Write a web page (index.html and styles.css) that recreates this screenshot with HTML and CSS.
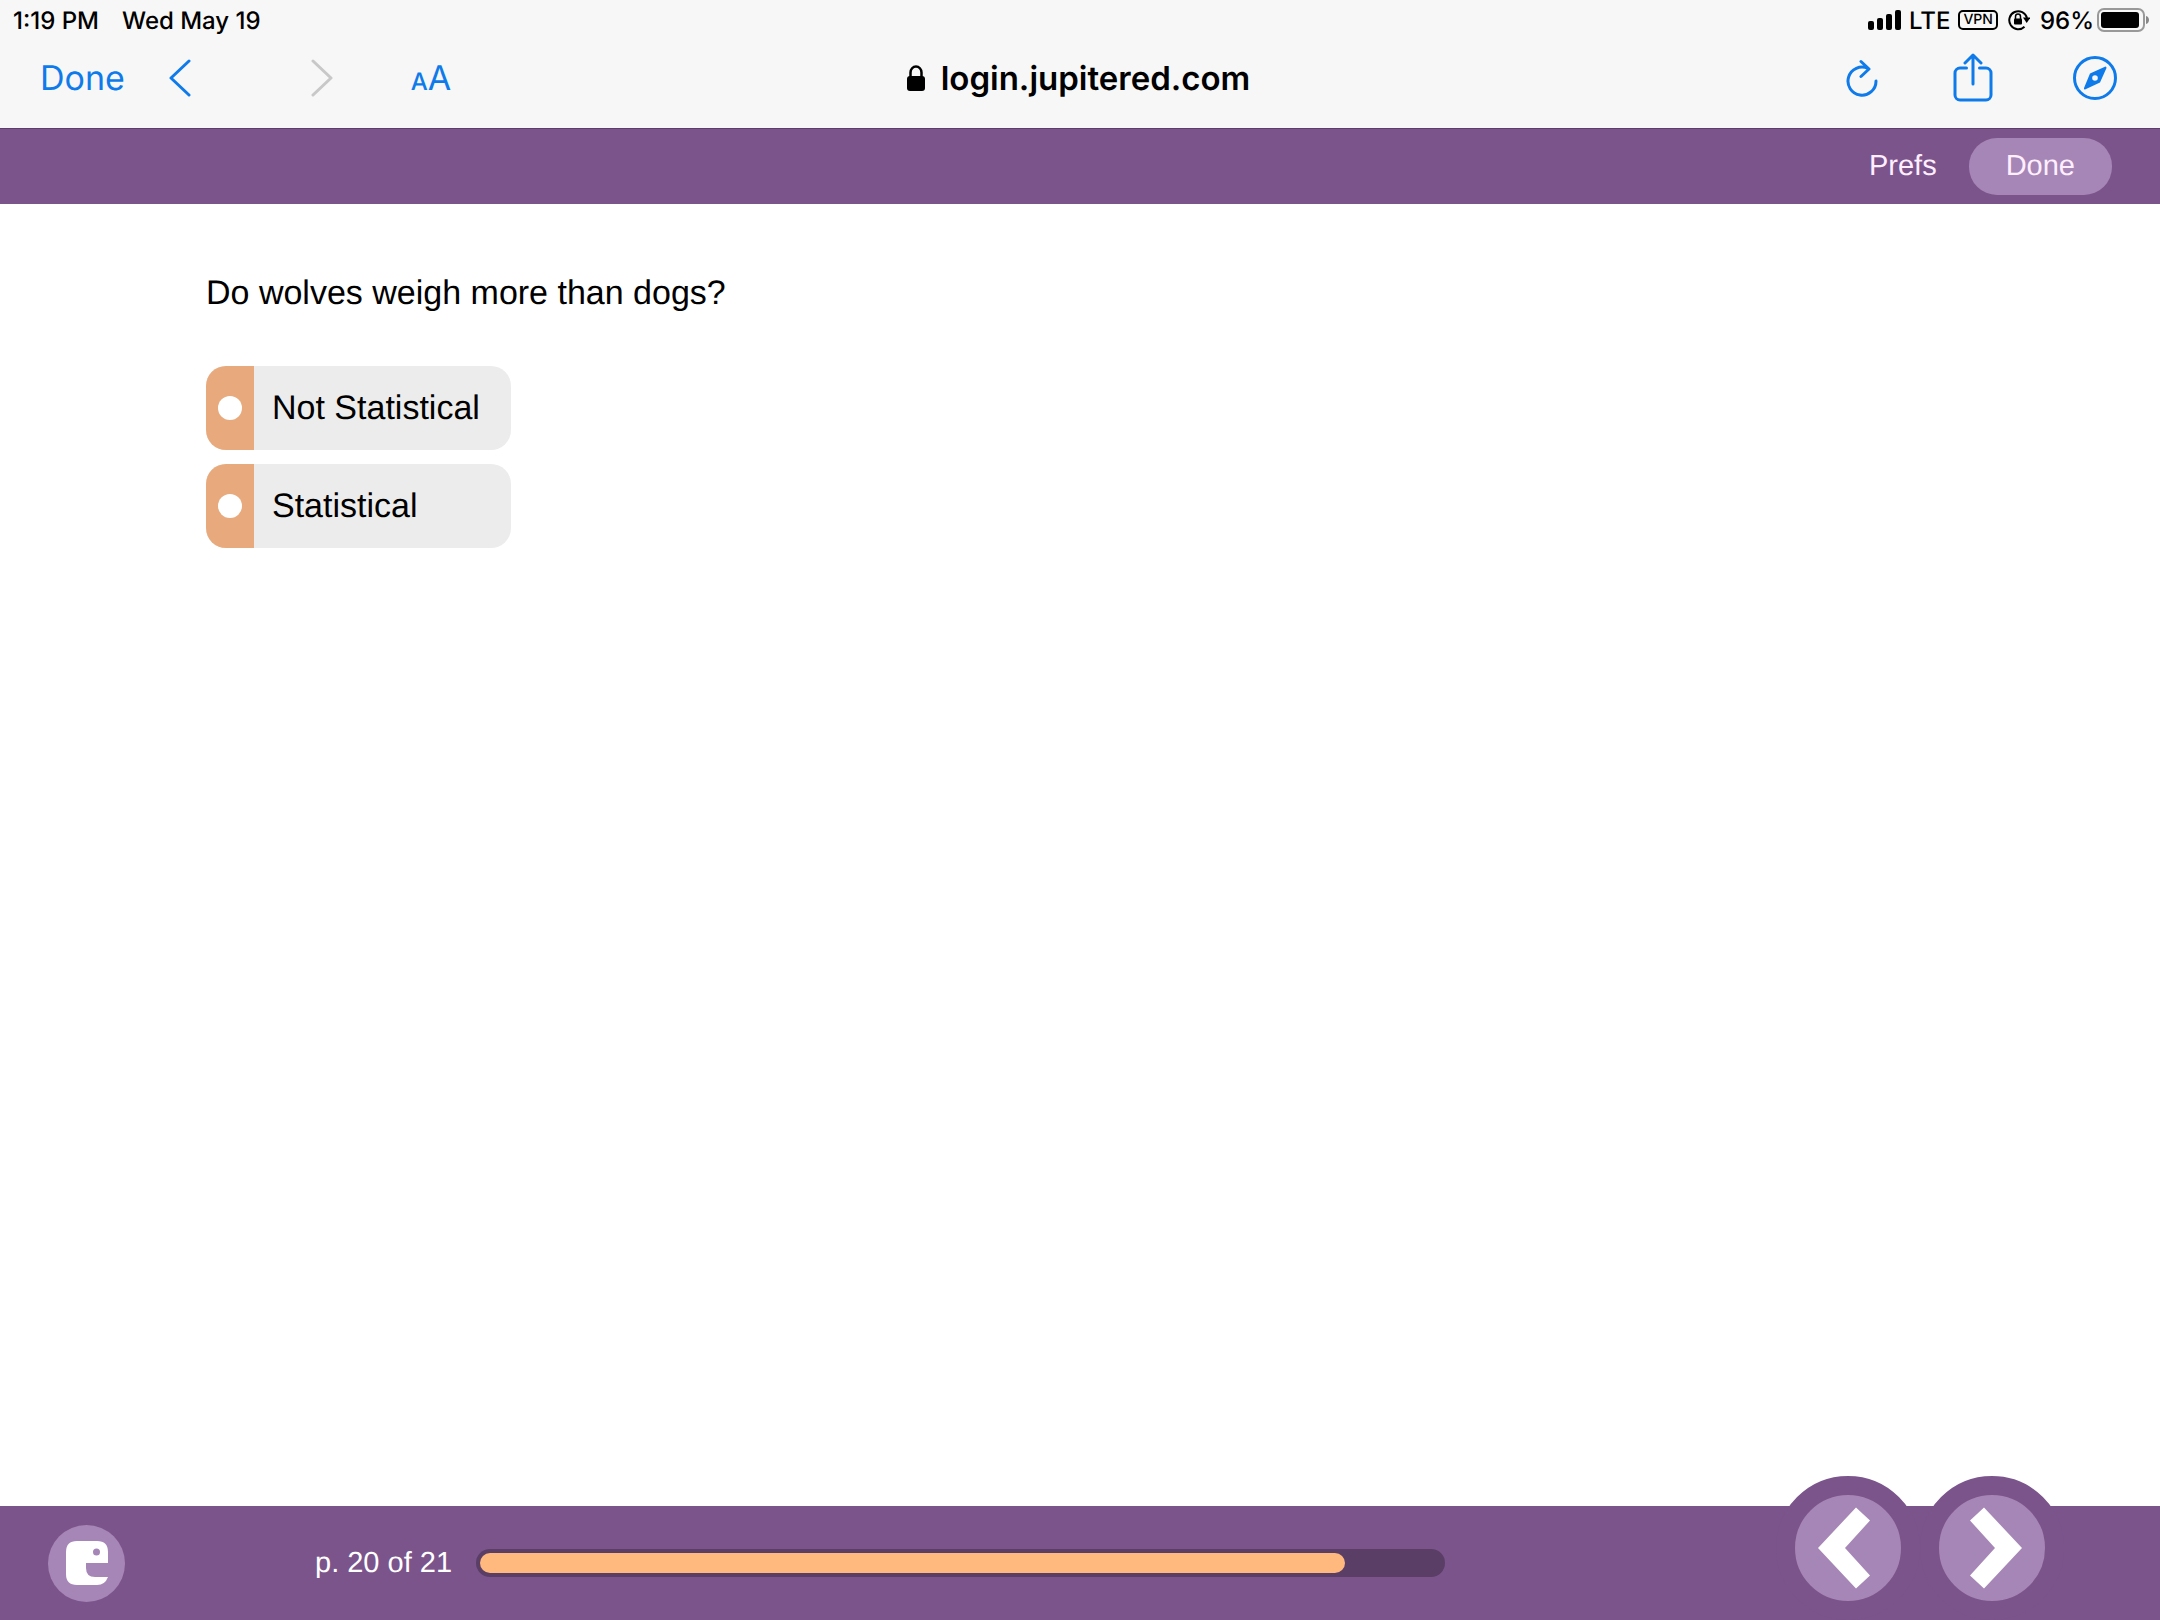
FILE: index.html
```html
<!DOCTYPE html>
<html lang="en">
<head>
  <meta charset="UTF-8" />
  <meta name="viewport" content="width=device-width, initial-scale=1.0"/>
  <title>login.jupitered.com</title>
  <link rel="stylesheet" href="styles.css">
</head>
<body>
  <!-- Browser bars -->
  <header class="browser">
    <div class="status">
      <span>1:19 PM</span>
      <span class="date">Wed May 19</span>
      <svg class="signal" width="34" height="20" viewBox="0 0 34 20">
        <rect x="0" y="11" width="6" height="9" rx="2"/>
        <rect x="9" y="8" width="6" height="12" rx="2"/>
        <rect x="18" y="4" width="6" height="16" rx="2"/>
        <rect x="27" y="0" width="6" height="20" rx="2"/>
      </svg>
      <span class="network">LTE</span>
      <span class="vpn">VPN</span>
      <svg class="rotation" width="22" height="22" viewBox="0 0 22 22">
        <path d="M16.500 17.700A9 9 0 1 1 19 9" fill="none" stroke="#000" stroke-width="2"/>
        <path d="M15 8.500H22.500L18.700 14Z"/>
        <rect x="6" y="9.500" width="8" height="6" rx="1"/>
        <path d="M7.500 10V7.500a2.500 2.500 0 0 1 5 0V10" fill="none" stroke="#000" stroke-width="1.500"/>
      </svg>
      <span class="percent">96%</span>
      <svg class="battery" width="53" height="24" viewBox="0 0 53 24">
        <rect x="1" y="1" width="46" height="22" rx="6" fill="none" stroke="#999" stroke-width="2"/>
        <rect x="4" y="4" width="38" height="16" rx="3"/>
        <path d="M49 8c4 1 4 7 0 8z" fill="#888"/>
      </svg>
    </div>

    <div class="toolbar">
      <div class="tools-left">
        <button class="tool done">Done</button>
        <button class="tool back" aria-label="Back">
          <svg width="22" height="38" viewBox="0 0 22 38"><path d="M20 2L2 19L20 36"/></svg>
        </button>
        <button class="tool forward" aria-label="Forward" disabled>
          <svg width="22" height="38" viewBox="0 0 22 38"><path d="M2 2L20 19L2 36"/></svg>
        </button>
        <button class="tool text-size"><small>A</small>A</button>
      </div>
      <div class="address">
        <svg width="18" height="26" viewBox="0 0 18 26">
          <rect x="0" y="11" width="18" height="15" rx="3"/>
          <path d="M3.500 12V7.500a5.500 6 0 0 1 11 0V12" fill="none" stroke="#000" stroke-width="2.500"/>
        </svg>
        <span>login.jupitered.com</span>
      </div>
      <div class="tools-right">
        <button class="tool" aria-label="Reload">
          <svg width="32" height="38" viewBox="0 0 32 38">
            <path d="M22 9.500A14 14 0 1 0 30 22M15 2.500L23 10L15 17.500"/>
          </svg>
        </button>
        <button class="tool share" aria-label="Share">
          <svg width="40" height="50" viewBox="0 0 40 50">
            <path d="M13.500 15H7a5 5 0 0 0-5 5V42a5 5 0 0 0 5 5H33a5 5 0 0 0 5-5V20a5 5 0 0 0-5-5H26.500M20 31V2.500M12 10L20 2L28 10"/>
          </svg>
        </button>
        <button class="tool compass" aria-label="Open in Safari">
          <svg width="44" height="44" viewBox="0 0 44 44">
            <circle cx="22" cy="22" r="20.500"/>
            <path class="needle" fill-rule="evenodd" d="M32.500 10.500Q33.500 10.500 33.500 12L27 26.500L12 33.500Q10.500 33.500 11 32L17 17.500ZM22 19.200a2.800 2.800 0 1 0 0 5.600a2.800 2.800 0 1 0 0-5.600Z"/>
          </svg>
        </button>
      </div>
    </div>
  </header>

  <!-- Top bar -->
  <nav class="topbar">
    <a href="#" class="prefs">Prefs</a>
    <button class="pill">Done</button>
  </nav>

  <main class="question">
    <p id="questionText">Do wolves weigh more than dogs?</p>
    <div class="choices" role="radiogroup" aria-labelledby="questionText">
      <label class="choice">
        <span class="marker"><input type="radio" name="answer" value="not"></span>
        <span class="choice-text">Not Statistical</span>
      </label>
      <label class="choice">
        <span class="marker"><input type="radio" name="answer" value="stat"></span>
        <span class="choice-text">Statistical</span>
      </label>
    </div>
  </main>

  <!-- Page progress and prev/next -->
  <footer class="bottombar">
    <button class="logo" aria-label="Menu">
      <svg width="42" height="44" viewBox="0 0 42 44">
        <path fill="#fff" fill-rule="evenodd" d="M11 0H31Q42 0 42 11V22H20V27Q20 36 29 36H42Q39 44 31 44H11Q0 44 0 33V11Q0 0 11 0ZM30.500 7.500a3.500 3.500 0 1 0 0 7a3.500 3.500 0 1 0 0-7Z"/>
      </svg>
    </button>
    <span class="page">p. 20 of 21</span>
    <div class="progress" role="progressbar" aria-label="Page" aria-valuenow="20" aria-valuemax="21">
      <div class="fill" style="width: 90%"></div>
    </div>
    <div class="pager">
      <button class="arrow" aria-label="Previous page">
        <svg width="106" height="106" viewBox="0 0 106 106"><path d="M61 12.500L75 25.500L50 53L75 80.500L61 93.500L23 53Z"/></svg>
      </button>
      <button class="arrow" aria-label="Next page">
        <svg width="106" height="106" viewBox="0 0 106 106"><path d="M45 12.500L31 25.500L56 53L31 80.500L45 93.500L83 53Z"/></svg>
      </button>
    </div>
  </footer>
</body>
</html>
```

FILE: styles.css
```css
* {
  box-sizing: border-box;
}

body {
  margin: 0;
  min-height: 100vh;
  display: flex;
  flex-direction: column;
  background: #fff;
  color: #000;
  font-family: "Liberation Sans", Arial, sans-serif;
  text-rendering: geometricPrecision;
}

button {
  padding: 0;
  border: none;
  background: none;
  font-family: inherit;
  text-rendering: inherit;
  cursor: pointer;
}

svg {
  display: block;
  flex-shrink: 0;
}

/* browser bars */
.browser {
  background: #f7f7f7;
  border-bottom: 1px solid #5c3f69;
  font-family: Inter, "Liberation Sans", sans-serif;
}

.status {
  display: flex;
  align-items: center;
  height: 40px;
  padding: 0 10px 0 13px;
  font-size: 24px;
  font-weight: 500;
}

.date {
  margin-left: 23px;
}

.signal {
  margin-left: auto;
}

.network {
  margin-left: 7px;
}

.vpn {
  margin-left: 8px;
  padding: 0 3px;
  border: 2px solid #000;
  border-radius: 5px;
  font-size: 14px;
  line-height: 16px;
}

.rotation {
  margin-left: 10px;
}

.percent {
  margin-left: 10px;
}

.battery {
  margin-left: 3px;
}

.toolbar {
  display: grid;
  grid-template-columns: 1fr auto 1fr;
  align-items: center;
  height: 88px;
  padding: 0 43px 12px 40px;
}

.tools-left, .tools-right, .address {
  display: flex;
  align-items: center;
}

.tools-right {
  justify-content: flex-end;
}

.tool {
  color: #0f7bea;
  font-size: 34px;
}

.tool svg {
  fill: none;
  stroke: currentColor;
  stroke-width: 3;
  stroke-linecap: round;
  stroke-linejoin: round;
}

.tool .needle {
  fill: currentColor;
  stroke: none;
}

.tool:disabled {
  color: #c8c8c8;
}

.back {
  margin-left: 44px;
}

.forward {
  margin-left: 120px;
}

.text-size {
  margin-left: 78px;
}

.text-size small {
  font-size: 24px;
  font-weight: 500;
}

.share {
  margin-left: 75px;
}

.compass {
  margin-left: 80px;
}

.address {
  gap: 16px;
  font-size: 33px;
  font-weight: 600;
}

/* purple bars */
.topbar {
  display: flex;
  justify-content: flex-end;
  align-items: center;
  gap: 32px;
  height: 75px;
  padding: 0 48px;
  background: #7b548c;
  font-size: 29px;
}

.prefs {
  color: #ffeeff;
  text-decoration: none;
}

.pill {
  height: 57px;
  padding: 0 37px;
  border-radius: 28px;
  background: #a686b6;
  color: #ffeeff;
  font-size: 29px;
}

/* question */
.question {
  flex: 1;
  padding: 69px 206px;
  font-size: 34px;
  line-height: 40px;
}

.question p {
  margin: 0 0 53px;
}

.choices {
  display: inline-grid;
  gap: 14px;
}

.choice {
  display: flex;
  height: 84px;
  border-radius: 20px;
  overflow: hidden;
  background: #ececec;
  cursor: pointer;
}

.marker {
  display: flex;
  flex-shrink: 0;
  align-items: center;
  justify-content: center;
  width: 48px;
  background: #e8aa7c;
}

.marker input {
  appearance: none;
  width: 24px;
  height: 24px;
  margin: 0;
  border-radius: 50%;
  background: #fff;
}

.marker input:checked {
  border: 6px solid #fff;
  background: #7b548c;
}

.choice-text {
  align-self: center;
  padding: 0 31px 0 18px;
  white-space: nowrap;
}

/* bottom bar */
.bottombar {
  display: flex;
  align-items: center;
  padding: 0 96px 0 48px;
  background: #7b548c;
}

.logo {
  display: flex;
  align-items: center;
  justify-content: center;
  width: 77px;
  height: 77px;
  border-radius: 50%;
  background: #a686b6;
}

.page {
  margin-left: 190px;
  color: #fff;
  font-size: 29px;
}

.progress {
  flex: 1;
  height: 28px;
  margin: 0 331px 0 24px;
  padding: 4px;
  border-radius: 14px;
  background: #5a3e66;
}

.fill {
  height: 20px;
  border-radius: 10px;
  background: #ffb87e;
}

.pager {
  display: flex;
  margin-top: -30px;
}

.arrow {
  border: 19px solid #7b548c;
  border-radius: 50%;
  background: #a686b6;
}

.arrow svg {
  fill: #fff;
}
```
